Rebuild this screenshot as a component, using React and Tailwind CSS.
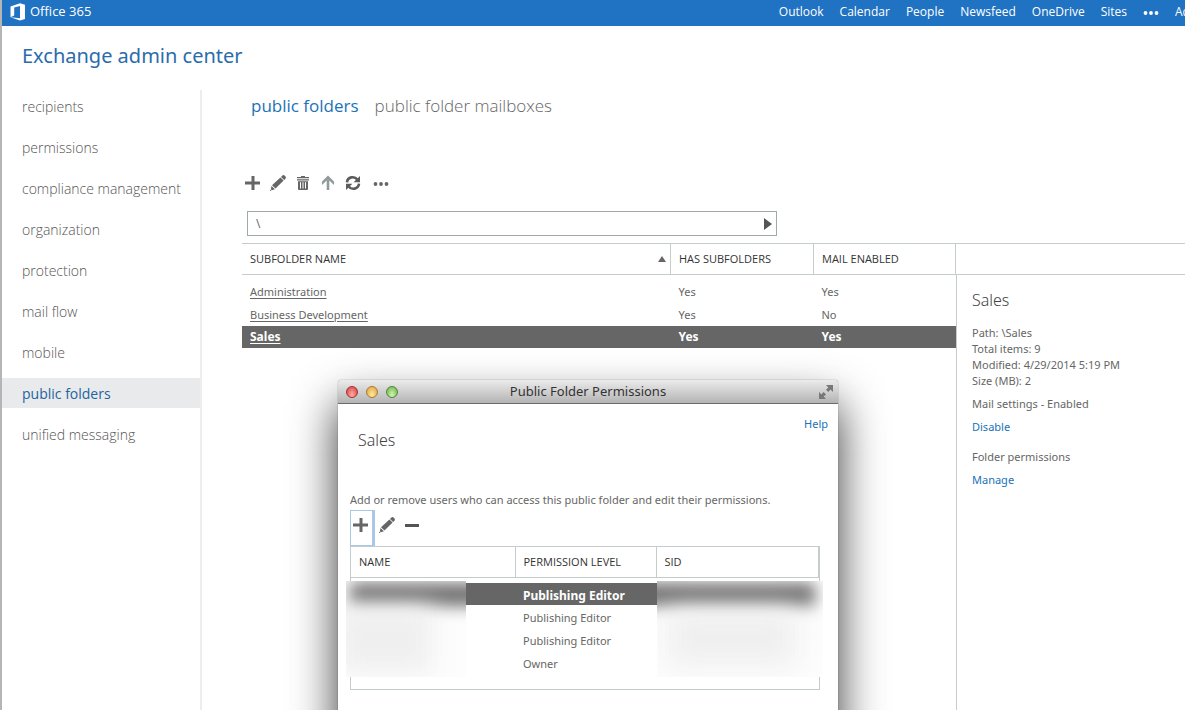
import React from "react";

const sans = "font-['Open_Sans','Noto_Sans',sans-serif]";

const sections = [
  "recipients",
  "permissions",
  "compliance management",
  "organization",
  "protection",
  "mail flow",
  "mobile",
  "public folders",
  "unified messaging",
];

const folders = [
  { name: "Administration", sub: "Yes", mail: "Yes" },
  { name: "Business Development", sub: "Yes", mail: "No" },
  { name: "Sales", sub: "Yes", mail: "Yes", selected: true },
];

const levels = ["Publishing Editor", "Publishing Editor", "Publishing Editor", "Owner"];

function OfficeLogo() {
  return (
    <svg viewBox="0 0 16 18" className="h-[18px] w-4" aria-hidden="true">
      <path
        fill="#fff"
        fillRule="evenodd"
        d="M0.5 3.6 L10 0.2 L15 1.7 V16 L10 17.6 L0.5 14.2 L10 15.3 V3.1 L4.2 4.5 V12.6 L0.5 14.2 Z"
      />
    </svg>
  );
}

function PlusIcon() {
  return (
    <svg viewBox="0 0 16 16" className="size-4" aria-hidden="true">
      <path fill="#666" d="M6.500 1h3v5.500H15v3H9.500V15h-3V9.500H0v-3h6.500z" />
    </svg>
  );
}

function PencilIcon() {
  return (
    <svg viewBox="0 0 16 16" className="size-4" aria-hidden="true">
      <path
        fill="#666"
        d="M11 1.900 12.400.500Q13.500-.300 14.600.600L15.500 1.500Q16.300 2.600 15.500 3.700L14.200 5ZM10.400 2.500 13.600 5.600 5.500 13.600 2 10.300ZM1.500 11.100 4.900 14.300 1.900 15.300 .900 14.300ZM.200 14.600 1.500 16H.100Z"
      />
    </svg>
  );
}

function TrashIcon() {
  return (
    <svg viewBox="0 0 16 16" className="size-4" aria-hidden="true">
      <path
        fill="#666"
        fillRule="evenodd"
        d="M6 1h4v1h4v1.300H2V2h4zM2 4.300h12v1.200H2zM3 6.200h10V14q0 1-1 1H4q-1 0-1-1zM5 7.200V13.600h1V7.200zM7.500 7.200V13.600h1V7.200zM10 7.200V13.600h1V7.200z"
      />
    </svg>
  );
}

function UpIcon() {
  return (
    <svg viewBox="0 0 16 16" className="size-4" aria-hidden="true">
      <path fill="#929b9b" d="M8 .500 14 6.500V10L9.300 5.600V15H6.700V5.600L2 10V6.500z" />
    </svg>
  );
}

function RefreshIcon() {
  return (
    <svg viewBox="0 0 16 16" className="size-4" aria-hidden="true">
      <g fill="none" stroke="#5c5c5c" strokeWidth="2.600">
        <path d="M2 7.300C2.500 1.700 9.500.700 12.300 4.600" />
        <path d="M14 8.700C13.500 14.300 6.500 15.300 3.700 11.400" />
      </g>
      <path fill="#5c5c5c" d="M15 1v6.300H8.600zM1 15V8.700h6.400z" />
    </svg>
  );
}

function DotsIcon({ color }) {
  return (
    <svg viewBox="0 0 16 16" className="size-4" fill={color} aria-hidden="true">
      <circle cx="2.500" cy="9" r="1.900" />
      <circle cx="8" cy="9" r="1.900" />
      <circle cx="13.500" cy="9" r="1.900" />
    </svg>
  );
}

function MinusIcon() {
  return (
    <svg viewBox="0 0 16 16" className="size-4" aria-hidden="true">
      <path fill="#555" d="M1 7h14v3H1z" />
    </svg>
  );
}

function ExpandIcon() {
  return (
    <svg viewBox="0 0 16 16" className="size-4" aria-hidden="true">
      <path
        fill="#787878"
        d="M8 1h7v7l-2.500-2.400L10.300 8 8 5.700l2.300-2.200zM1 15V8l2.400 2.400L5.600 8 8 10.400 5.700 12.600 8 15z"
      />
    </svg>
  );
}

function ToolButton({ label, className = "w-[25px]", children }) {
  return (
    <button type="button" aria-label={label} className={`flex h-7 items-center justify-center ${className}`}>
      {children}
    </button>
  );
}

function TopBar() {
  return (
    <header className="flex h-[26px] shrink-0 items-center overflow-hidden bg-[#2072c2] pb-[3px] text-white">
      <a href="#home" className="flex items-center gap-1 pl-2">
        <OfficeLogo />
        <span className="text-[13px]">Office 365</span>
      </a>
      <nav className="ml-auto flex items-center gap-4 text-xs whitespace-nowrap">
        <a href="#outlook">Outlook</a>
        <a href="#calendar">Calendar</a>
        <a href="#people">People</a>
        <a href="#newsfeed">Newsfeed</a>
        <a href="#onedrive">OneDrive</a>
        <a href="#sites">Sites</a>
        <button type="button" aria-label="More apps">
          <DotsIcon color="#fff" />
        </button>
        <a href="#admin" className="w-2.5 overflow-hidden">Admin</a>
      </nav>
    </header>
  );
}

function Sidebar() {
  return (
    <nav className="w-[200px] shrink-0 border-r-2 border-[#ededed] pt-px">
      <ul className="flex flex-col gap-[11px]">
        {sections.map((s) => (
          <li key={s}>
            <a
              href={"#" + s.replace(" ", "-")}
              className={
                "flex h-[30px] items-center pt-0.5 pl-5 text-sm " +
                (s === "public folders" ? "bg-[#e9eaec] text-[#22649f]" : "font-light text-[#555]")
              }
            >
              {s}
            </a>
          </li>
        ))}
      </ul>
    </nav>
  );
}

function FolderTable() {
  return (
    <table className="w-full table-fixed border-collapse text-left text-[11px]">
      <colgroup>
        <col />
        <col className="w-[143px]" />
        <col className="w-[142px]" />
      </colgroup>
      <thead>
        <tr className="h-[31px] border-y border-[#c5cccc] text-[#333]">
          <th className="border-r border-[#c5cccc] px-2 font-normal">
            <span className="flex items-center justify-between">
              SUBFOLDER NAME
              <svg viewBox="0 0 8 6" className="-mr-1 h-1.5 w-2" aria-hidden="true">
                <path fill="#666" d="M4 0 8 6H0z" />
              </svg>
            </span>
          </th>
          <th className="border-r border-[#c5cccc] px-2 font-normal">HAS SUBFOLDERS</th>
          <th className="border-r border-[#c5cccc] px-2 font-normal">MAIL ENABLED</th>
        </tr>
      </thead>
      <tbody className="font-['Noto_Sans',sans-serif] before:block before:h-[5px] before:content-['']">
        {folders.map((f) => (
          <tr
            key={f.name}
            className={f.selected ? "h-[22px] bg-[#666] text-xs font-bold text-white" : "h-[23px] text-[#666]"}
          >
            <td className="px-2 leading-4">
              <a href={"#" + f.name.toLowerCase().replace(" ", "-")} className="underline underline-offset-2">
                {f.name}
              </a>
            </td>
            <td className="px-2 leading-4">{f.sub}</td>
            <td className="px-2 leading-4">{f.mail}</td>
          </tr>
        ))}
      </tbody>
    </table>
  );
}

function Details() {
  return (
    <aside className="flex w-[229px] shrink-0 flex-col border-t border-[#c5cccc] font-['Noto_Sans',sans-serif] text-[11px] leading-4 text-[#666]">
      <div className="h-[31px] shrink-0 border-b border-[#c5cccc]" />
      <div className="flex-1 border-l border-[#c5cccc] pt-[13px] pl-[15px]">
        <h2 className="text-base leading-6 font-light text-[#444]">Sales</h2>
        <p className="mt-[13px]">Path: \Sales</p>
        <p>Total items: 9</p>
        <p>Modified: 4/29/2014 5:19 PM</p>
        <p>Size (MB): 2</p>
        <p className="mt-[7px]">Mail settings - Enabled</p>
        <a href="#disable" className="mt-[7px] block text-[#2072b8]">Disable</a>
        <p className="mt-[14px]">Folder permissions</p>
        <a href="#manage" className="mt-[7px] block text-[#2072b8]">Manage</a>
      </div>
    </aside>
  );
}

function PermissionsTable() {
  return (
    <div className="relative h-36 border border-[#c5cccc]">
      <table className="w-full table-fixed border-collapse text-left text-[11px]">
        <colgroup>
          <col className="w-[164px]" />
          <col className="w-[141px]" />
          <col />
        </colgroup>
        <thead>
          <tr className="h-[30px] border-b border-[#c5cccc] text-[#333]">
            <th className="border-r border-[#c5cccc] px-2 font-normal">NAME</th>
            <th className="border-r border-[#c5cccc] px-2 font-normal">PERMISSION LEVEL</th>
            <th className="border-r border-[#c5cccc] px-2 font-normal">SID</th>
          </tr>
        </thead>
        <tbody className="font-['Noto_Sans',sans-serif] before:block before:h-[5px] before:content-['']">
          {levels.map((level, i) => (
            <tr key={i} className={i === 0 ? "h-[22px] bg-[#666] text-xs font-bold text-white" : "h-[23px] text-[#666]"}>
              <td className="px-2 pt-1 leading-4" />
              <td className="px-2 pt-1 leading-4">{level}</td>
              <td className="px-2 pt-1 leading-4" />
            </tr>
          ))}
        </tbody>
      </table>
      <div className="absolute top-[34px] -left-[5px] flex h-24 w-[120px] flex-col overflow-hidden bg-[#fdfdfd]">
        <div className="mt-0.5 -mr-5 ml-1 h-[23px] shrink-0 bg-[#707070] blur-[8px]" />
        <div className="-ml-2 h-[66px] w-[94px] shrink-0 bg-[#efefef] blur-[12px]" />
      </div>
      <div className="absolute top-[34px] -right-1 flex h-24 w-[166px] flex-col overflow-hidden bg-[#fdfdfd]">
        <div className="mt-0.5 mr-2 -ml-5 h-[23px] shrink-0 bg-[#707070] blur-[8px]" />
        <div className="mt-1 ml-2.5 h-14 w-[130px] shrink-0 bg-[#efefef] blur-[14px]" />
      </div>
    </div>
  );
}

function PermissionsWindow() {
  return (
    <section
      role="dialog"
      aria-label="Public Folder Permissions"
      className="absolute top-[380px] left-[336px] w-[500px] rounded-t bg-white shadow-[0_24px_46px_rgba(0,0,0,0.8),0_0_1px_rgba(0,0,0,0.8)]"
    >
      <div className="flex h-6 items-center rounded-t border-b border-[#6a6a6a] bg-linear-to-b from-[#ececec] to-[#b4b4b4] pr-1 pl-2">
        <div className="flex w-14 gap-2">
          <button type="button" aria-label="Close" className="size-3 rounded-full border border-[#9c3431] bg-radial-[at_50%_80%] from-[#ffb0a8] to-[#d8353a]" />
          <button type="button" aria-label="Minimize" className="size-3 rounded-full border border-[#a87a35] bg-radial-[at_50%_80%] from-[#ffeaa0] to-[#e39c35]" />
          <button type="button" aria-label="Zoom" className="size-3 rounded-full border border-[#55853f] bg-radial-[at_50%_80%] from-[#d4f5b0] to-[#63b045]" />
        </div>
        <h2 className="flex-1 text-center font-['Noto_Sans',sans-serif] text-[13px] text-[#333]">Public Folder Permissions</h2>
        <button type="button" aria-label="Full screen" className="flex w-15 justify-end">
          <ExpandIcon />
        </button>
      </div>
      <div className="flex flex-col px-3 pb-32 font-['Noto_Sans',sans-serif]">
        <a href="#help" className="-mr-0.5 self-end pt-3 text-[11px] leading-4 text-[#2072b8]">Help</a>
        <h3 className="pl-2 text-base leading-4 font-light text-[#444]">Sales</h3>
        <p className="mt-11 text-[11px] leading-4 whitespace-nowrap text-[#666]">
          Add or remove users who can access this public folder and edit their permissions.
        </p>
        <div className="mt-0.5 flex h-9">
          <button
            type="button"
            aria-label="Add"
            className="flex w-[25px] border border-r-3 border-[#a9c8e6] pt-1.5 pl-0.5"
          >
            <PlusIcon />
          </button>
          <button type="button" aria-label="Edit" className="flex w-6 justify-center pt-[7px]">
            <PencilIcon />
          </button>
          <button type="button" aria-label="Remove" className="flex w-[25px] justify-center pt-[7px]">
            <MinusIcon />
          </button>
        </div>
        <div className={`mr-1.5 ${sans}`}>
          <PermissionsTable />
        </div>
      </div>
    </section>
  );
}

export default function App() {
  return (
    <div className={`relative flex h-screen flex-col overflow-hidden border-l-2 border-[#b5b5b5] bg-white ${sans}`}>
      <TopBar />
      <h1 className="flex h-16 shrink-0 items-center pb-1 pl-5 font-['Noto_Sans',sans-serif] text-xl text-[#2a6cab]">Exchange admin center</h1>
      <div className="flex min-h-0 flex-1">
        <Sidebar />
        <main className="flex min-w-0 flex-1 flex-col pl-[38px]">
          <div className="ml-[11px] flex h-8 items-center gap-4 text-[17px]">
            <a href="#public-folders" className="text-[#2072b8]">public folders</a>
            <a href="#mailboxes" className="font-light text-[#666]">public folder mailboxes</a>
          </div>
          <div className="mt-[47px] flex">
            <ToolButton label="New"><PlusIcon /></ToolButton>
            <ToolButton label="Edit"><PencilIcon /></ToolButton>
            <ToolButton label="Delete"><TrashIcon /></ToolButton>
            <ToolButton label="Up"><UpIcon /></ToolButton>
            <ToolButton label="Refresh"><RefreshIcon /></ToolButton>
            <ToolButton label="More" className="w-[31px]"><DotsIcon color="#666" /></ToolButton>
          </div>
          <form className="mt-[14px] ml-[7px] flex h-[25px] max-w-[530px] shrink-0 items-center border border-[#a0a8a8] pr-1">
            <input
              type="text"
              aria-label="Folder path"
              defaultValue="\"
              className="min-w-0 flex-1 pl-2 text-xs text-[#666] outline-none"
            />
            <button type="button" aria-label="Go" className="flex">
              <svg viewBox="0 0 8 12" className="h-3 w-2" aria-hidden="true">
                <path fill="#555" d="M0 0 8 6 0 12z" />
              </svg>
            </button>
          </form>
          <div className="mt-[7px] ml-0.5 flex min-h-0 flex-1">
            <div className="min-w-0 flex-1">
              <FolderTable />
            </div>
            <Details />
          </div>
        </main>
      </div>
      <PermissionsWindow />
    </div>
  );
}
